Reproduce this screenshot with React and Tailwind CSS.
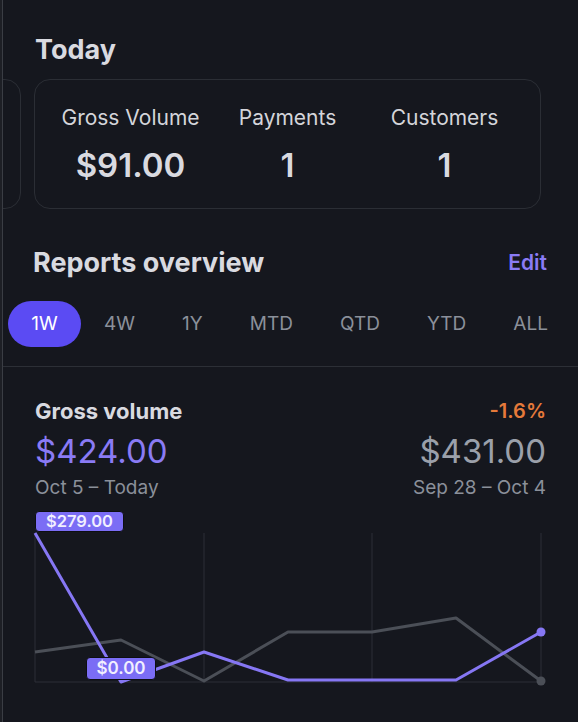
import React from 'react';

const purple = [
  [0, 23], [86, 172], [169, 142], [253, 170], [337, 170], [421, 170], [506, 122],
];
const gray = [
  [0, 142], [86, 130], [169, 171], [253, 122], [337, 122], [421, 108], [506, 171],
];
const tabs = ['4W', '1Y', 'MTD', 'QTD', 'YTD', 'ALL'];

const pts = (arr) => arr.map((p) => p.join(',')).join(' ');

function Stat({ label, value }) {
  return (
    <div className="flex flex-col items-center">
      <div className="text-[21px] leading-[24px] text-[#d4d5da]">{label}</div>
      <div className="mt-[16px] text-[33px] leading-[38px] font-semibold text-[#d9dae0]">{value}</div>
    </div>
  );
}

function Chart() {
  return (
    <div className="relative mt-[11px] h-[172px] w-[506px]">
      <svg className="absolute inset-0 overflow-visible" width="506" height="172" viewBox="0 0 506 172">
        {[0, 169, 337, 506].map((x) => (
          <line key={x} x1={x} y1="23" x2={x} y2="172" stroke="#2c2f36" strokeWidth="1" />
        ))}
        <line x1="0" y1="172" x2="506" y2="172" stroke="#2c2f36" strokeWidth="1" />
        <polyline points={pts(gray)} fill="none" stroke="#4b4f57" strokeWidth="3" strokeLinejoin="round" />
        <circle cx="506" cy="171" r="4.5" fill="#4b4f57" />
        <polyline points={pts(purple)} fill="none" stroke="#8677f4" strokeWidth="3" strokeLinejoin="round" />
        <circle cx="506" cy="122" r="4.5" fill="#8677f4" />
      </svg>
      <div className="absolute left-0 top-[1px] flex h-[21px] w-[89px] items-center justify-center rounded-[4px] border border-[#0d0e12] bg-[#7b6df5] text-[16.5px] font-semibold text-[#f1efff]">
        $279.00
      </div>
      <div className="absolute left-[51px] top-[147px] flex h-[23px] w-[70px] items-center justify-center rounded-[4px] border border-[#0d0e12] bg-[#7b6df5] text-[17px] font-semibold text-[#f1efff]">
        $0.00
      </div>
    </div>
  );
}

export default function App() {
  return (
    <div
      className="flex min-h-[722px] w-[578px] bg-[#15171e]"
      style={{ fontFamily: 'Inter, "Noto Sans", sans-serif' }}
    >
      <div className="w-[2px] shrink-0 bg-[#1d1f25]" />
      <div className="w-[1px] shrink-0 bg-[#3a3d44]" />
      <div className="flex min-w-0 flex-1 flex-col">
        <div className="pl-[32px] pt-[36px] text-[27px] leading-[28px] font-bold text-[#d9dae0]">Today</div>

        <div className="mt-[15px] flex gap-[13px] overflow-hidden">
          <div className="-ml-[80px] h-[130px] w-[98px] shrink-0 rounded-[16px] border border-[#2b2e35]" />
          <div className="grid h-[130px] w-[507px] shrink-0 grid-cols-3 rounded-[16px] border border-[#2b2e35] px-[17px] pt-[26px]">
            <Stat label="Gross Volume" value="$91.00" />
            <Stat label="Payments" value="1" />
            <Stat label="Customers" value="1" />
          </div>
        </div>

        <div className="mt-[38px] flex items-center justify-between pl-[30px] pr-[31px]">
          <div className="text-[27px] leading-[32px] font-bold text-[#d9dae0]">Reports overview</div>
          <div className="text-[21px] leading-[24px] font-semibold text-[#8a7bf5]">Edit</div>
        </div>

        <div className="mt-[22px] flex items-center pl-[5px] pr-[7px]">
          <div className="flex h-[46px] w-[73px] shrink-0 items-center justify-center rounded-full bg-[#5b4bf3] text-[19px] text-white">
            1W
          </div>
          <div className="flex flex-1 items-center justify-between">
            {tabs.map((t) => (
              <div key={t} className="flex h-[46px] items-center px-[23px] text-[19px] text-[#8b909a]">
                {t}
              </div>
            ))}
          </div>
        </div>

        <div className="mt-[19px] h-[1px] bg-[#2c2f36]" />

        <div className="flex flex-col pl-[32px] pr-[32px]">
          <div className="mt-[32px] flex items-center justify-between">
            <div className="text-[22px] leading-[24px] font-bold text-[#d9dae0]">Gross volume</div>
            <div className="text-[20px] leading-[24px] font-semibold text-[#e57a3a]">-1.6%</div>
          </div>
          <div className="mt-[9px] flex items-center justify-between">
            <div className="text-[33px] leading-[38px] text-[#8a7bf5]">$424.00</div>
            <div className="text-[33px] leading-[38px] text-[#9ba0aa]">$431.00</div>
          </div>
          <div className="mt-[7px] flex items-center justify-between">
            <div className="text-[19px] leading-[22px] text-[#8b909a]">Oct 5 – Today</div>
            <div className="text-[19px] leading-[22px] text-[#8b909a]">Sep 28 – Oct 4</div>
          </div>
          <Chart />
        </div>
      </div>
    </div>
  );
}
